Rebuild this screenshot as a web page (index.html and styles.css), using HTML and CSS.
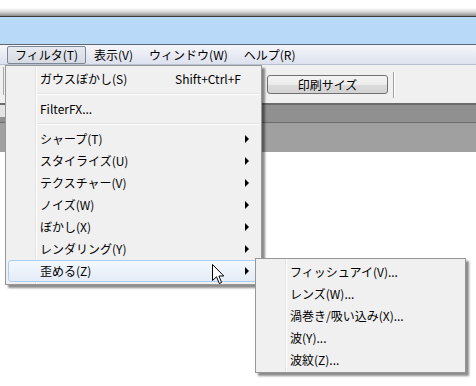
FILE: index.html
```html
<!DOCTYPE html>
<html lang="ja">
<head>
    <meta charset="UTF-8">
    <title>フィルタメニュー</title>
    <link rel="stylesheet" href="styles.css">
</head>
<body>
    <div class="window">
        <div class="shade"></div>
        <div class="titlebar"></div>

        <nav class="menubar">
            <span class="bar-item active">フィルタ(T)</span>
            <span class="bar-item">表示(V)</span>
            <span class="bar-item">ウィンドウ(W)</span>
            <span class="bar-item">ヘルプ(R)</span>
        </nav>

        <div class="toolbar">
            <span class="grip"></span>
            <button class="tool-button">印刷サイズ</button>
            <span class="tool-sep"></span>
        </div>

        <div class="docbar">
            <div class="tabs"><span class="tab"></span></div>
            <div class="ruler"></div>
        </div>

        <div class="canvas"></div>
    </div>

    <!-- フィルタ menu -->
    <div class="menu main-menu">
        <div class="item"><span class="label">ガウスぼかし(S)</span><span class="shortcut">Shift+Ctrl+F</span></div>
        <div class="sep"></div>
        <div class="item"><span class="label">FilterFX...</span></div>
        <div class="sep"></div>
        <div class="item"><span class="label">シャープ(T)</span><span class="arrow"></span></div>
        <div class="item"><span class="label">スタイライズ(U)</span><span class="arrow"></span></div>
        <div class="item"><span class="label">テクスチャー(V)</span><span class="arrow"></span></div>
        <div class="item"><span class="label">ノイズ(W)</span><span class="arrow"></span></div>
        <div class="item"><span class="label">ぼかし(X)</span><span class="arrow"></span></div>
        <div class="item"><span class="label">レンダリング(Y)</span><span class="arrow"></span></div>
        <div class="item hover"><span class="label">歪める(Z)</span><span class="arrow"></span></div>
    </div>

    <!-- 歪める submenu -->
    <div class="menu sub-menu">
        <div class="item"><span class="label">フィッシュアイ(V)...</span></div>
        <div class="item"><span class="label">レンズ(W)...</span></div>
        <div class="item"><span class="label">渦巻き/吸い込み(X)...</span></div>
        <div class="item"><span class="label">波(Y)...</span></div>
        <div class="item"><span class="label">波紋(Z)...</span></div>
    </div>

    <svg class="pointer" width="13" height="21" viewBox="0 0 13 21">
        <path d="M0.5 0.5 L0.5 16.5 L4.5 12.8 L7.3 19.5 L9.6 18.5 L6.9 12 L11.8 12 Z" fill="#fff" stroke="#000" stroke-width="1" stroke-linejoin="miter"/>
    </svg>
</body>
</html>
```

FILE: styles.css
```css
:root {
    --menu-bg: #f0f0f0;
    --menu-border: #979797;
    --gutter: #e2e3e3;
    --text: #000000;
}

body {
    margin: 0;
    width: 476px;
    height: 386px;
    overflow: hidden;
    position: relative;
    background: #ffffff;
    font-family: "Noto Sans CJK JP", "Noto Sans", sans-serif;
    font-size: 12px;
    color: var(--text);
}

.window {
    display: flex;
    flex-direction: column;
    height: 100%;
}

.shade {
    height: 16px;
    background: linear-gradient(#ffffff 0, #ffffff 8px, #d4d4d4 12px, #8c8c8c 16px);
    border-bottom: 1px solid #3c3c3c;
}

.titlebar {
    height: 27px;
    background: #b9d9f8;
    border-bottom: 1px solid #5e6670;
}

.menubar {
    display: flex;
    align-items: center;
    height: 18px;
    padding: 1px 0 0 7px;
    background: linear-gradient(#f6f7fb, #dde1ee);
    border-bottom: 1px solid #b9bfce;
}

.bar-item {
    height: 16px;
    line-height: 16px;
    padding: 0 7px;
    border: 1px solid transparent;
    border-radius: 2px;
    white-space: nowrap;
}

.bar-item.active {
    border-color: #7d8896;
    background: linear-gradient(#e7eaf0, #d6dae3);
}

.toolbar {
    display: flex;
    align-items: flex-start;
    height: 38px;
    background: #f0f0f0;
}

.grip {
    width: 1px;
    height: 28px;
    margin: 2px 0 0 3px;
    background: #a8a8a8;
}

.tool-button {
    width: 121px;
    height: 19px;
    margin: 10px 0 0 263px;
    padding: 0;
    border: 1px solid #707070;
    border-radius: 3px;
    background: linear-gradient(#f4f4f4 0, #ececec 50%, #dcdcdc 51%, #d2d2d2 100%);
    font-family: inherit;
    font-size: 12px;
    line-height: 16px;
    color: #000;
}

.tool-sep {
    width: 1px;
    height: 26px;
    margin: 7px 0 0 5px;
    background: #a0a0a0;
    border-right: 1px solid #ffffff;
}

.docbar {
    border-top: 2px solid #6c6c6c;
}

.tabs {
    height: 17px;
    background: #909090;
    border-bottom: 1px solid #6c6c6c;
}

.tab {
    display: block;
    width: 5px;
    height: 12px;
    background: #e4e4e4;
}

.ruler {
    height: 29px;
    background: #a0a0a0;
}

.canvas {
    flex: 1;
    background: #ffffff;
}

/* popup menus */

.menu {
    position: absolute;
    border: 1px solid var(--menu-border);
    background:
        linear-gradient(to right, transparent 29px, var(--gutter) 29px, var(--gutter) 30px, #ffffff 30px, #ffffff 31px, transparent 31px),
        var(--menu-bg);
    box-shadow: 3px 3px 2px rgba(0, 0, 0, 0.45);
}

.main-menu {
    left: 5px;
    top: 65px;
    width: 255px;
    padding: 2px 0 2px;
}

.sub-menu {
    left: 255px;
    top: 258px;
    width: 209px;
    padding: 2px 0 1px;
}

.item {
    display: flex;
    align-items: center;
    height: 20px;
    line-height: 20px;
    margin: 0 2px;
    padding: 0 0 0 31px;
    border: 1px solid transparent;
    border-radius: 3px;
    white-space: nowrap;
}

.item .label {
    flex: 1;
}

.shortcut {
    padding-right: 17px;
}

.arrow {
    width: 0;
    height: 0;
    margin-right: 9px;
    border-left: 4px solid #000;
    border-top: 4px solid transparent;
    border-bottom: 4px solid transparent;
}

.item.hover {
    border-color: #a9cdf4;
    background: linear-gradient(#f4f8fd, #e3ecf8);
}

.sep {
    height: 5px;
    padding-top: 3px;
    margin: 0 2px 0 31px;
}

.sep::before {
    content: '';
    display: block;
    height: 0;
    border-top: 1px solid var(--gutter);
    border-bottom: 1px solid #ffffff;
}

.pointer {
    position: absolute;
    left: 212px;
    top: 264px;
}
```
